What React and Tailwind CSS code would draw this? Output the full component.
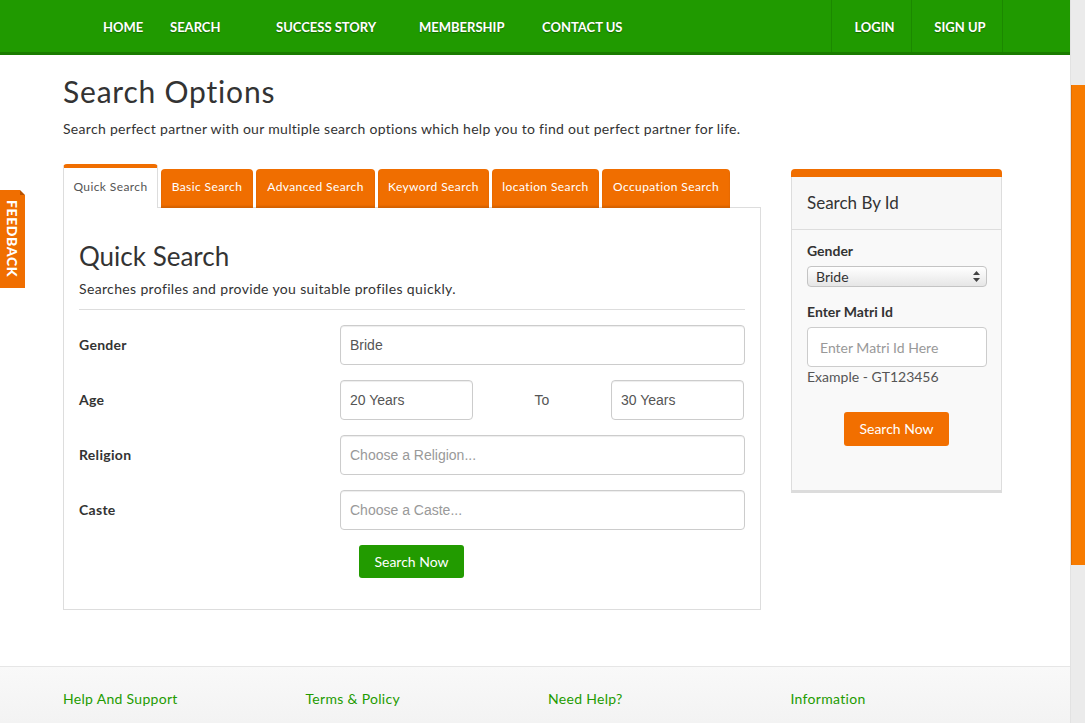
import React from "react";

const navLeft = [
  { label: "HOME", w: "w-[67px]" },
  { label: "SEARCH", w: "w-[106px]" },
  { label: "SUCCESS STORY", w: "w-[143px]" },
  { label: "MEMBERSHIP", w: "w-[123px]" },
  { label: "CONTACT US", w: "w-[100px]" },
];

const tabs = [
  { label: "Basic Search", w: "w-[92px]" },
  { label: "Advanced Search", w: "w-[119px]" },
  { label: "Keyword Search", w: "w-[111px]" },
  { label: "location Search", w: "w-[107px]" },
  { label: "Occupation Search", w: "w-[128px]" },
];

function Field({ label, children }) {
  return (
    <div className="flex items-center h-[40px]">
      <div className="w-[261px] pb-[2px] text-[14px] font-bold tracking-[0.3px] text-[#333]">{label}</div>
      {children}
    </div>
  );
}

function TextBox({ value, placeholder, className = "w-[405px]" }) {
  return (
    <div
      className={`${className} h-[40px] border border-[#ccc] rounded-[4px] bg-white shadow-[inset_0_1px_1px_rgba(0,0,0,0.075)] flex items-center px-[9px] text-[14px] ${
        value ? "text-[#555]" : "text-[#999]"
      }`}
      style={{ fontFamily: '"Liberation Sans", Arial, sans-serif' }}
    >
      {value || placeholder}
    </div>
  );
}

export default function App() {
  return (
    <div
      className="relative flex h-[723px] w-[1085px] overflow-hidden bg-white text-[#333]"
      style={{ fontFamily: 'Lato, "Open Sans", sans-serif' }}
    >
      <div className="w-[1070px] flex flex-col">
        {/* top nav */}
        <div className="h-[55px] bg-[#209a00] border-b-[3px] border-[#1a7c00]">
          <div className="w-[940px] ml-[63px] h-full flex">
            <div className="flex items-center pl-[40px] pt-[4px] flex-1">
              {navLeft.map((n) => (
                <div
                  key={n.label}
                  className={`${n.w} text-[13px] font-bold text-white [text-shadow:0_1px_1px_rgba(0,0,0,0.35)]`}
                >
                  {n.label}
                </div>
              ))}
            </div>
            <div className="flex h-full">
              <div className="w-[80px] h-full pt-[4px] pl-[6px] border-l border-[#1b8800] flex items-center justify-center text-[13px] font-bold text-white [text-shadow:0_1px_1px_rgba(0,0,0,0.35)]">
                LOGIN
              </div>
              <div className="w-[92px] h-full pt-[4px] pl-[6px] border-l border-r border-[#1b8800] flex items-center justify-center text-[13px] font-bold text-white [text-shadow:0_1px_1px_rgba(0,0,0,0.35)]">
                SIGN UP
              </div>
            </div>
          </div>
        </div>

        {/* content */}
        <div className="w-[940px] ml-[63px] pt-[18px]">
          <h1 className="text-[30px] leading-[36px] tracking-[0.8px] text-[#333]">Search Options</h1>
          <p className="mt-[10px] text-[14px] leading-[20px] tracking-[0.3px] text-[#333]">
            Search perfect partner with our multiple search options which help you to find out perfect partner for life.
          </p>

          <div className="mt-[25px] flex gap-[30px]">
            {/* left column */}
            <div className="w-[698px]">
              <div className="flex items-end gap-[2px] relative z-10 -mb-px">
                <div className="w-[95px] h-[44px] pb-[3px] bg-white border-t-4 border-[#f06e00] border-x border-x-[#ddd] rounded-t-[4px] flex items-center justify-center text-[12px] tracking-[0.4px] text-[#555]">
                  Quick Search
                </div>
                {tabs.map((t) => (
                  <div
                    key={t.label}
                    className={`${t.w} ml-px h-[39px] pb-[3px] bg-[#f06e00] rounded-t-[4px] shadow-[inset_0_-2px_2px_rgba(0,0,0,0.12)] flex items-center justify-center text-[12px] tracking-[0.4px] text-white`}
                  >
                    {t.label}
                  </div>
                ))}
              </div>
              <div className="border border-[#ddd] px-[15px] pt-[32px] pb-[31px]">
                <h2 className="text-[26px] leading-[32px] text-[#333]">Quick Search</h2>
                <p className="mt-[7px] text-[14px] leading-[20px] tracking-[0.35px] text-[#333]">
                  Searches profiles and provide you suitable profiles quickly.
                </p>
                <div className="mt-[10px] border-t border-[#ddd]" />
                <div className="mt-[15px] flex flex-col gap-[15px]">
                  <Field label="Gender">
                    <TextBox value="Bride" />
                  </Field>
                  <Field label="Age">
                    <TextBox value="20 Years" className="w-[133px]" />
                    <div
                      className="w-[138px] text-center text-[14px] text-[#555]"
                      style={{ fontFamily: '"Liberation Sans", Arial, sans-serif' }}
                    >
                      To
                    </div>
                    <TextBox value="30 Years" className="w-[133px]" />
                  </Field>
                  <Field label="Religion">
                    <TextBox placeholder="Choose a Religion..." />
                  </Field>
                  <Field label="Caste">
                    <TextBox placeholder="Choose a Caste..." />
                  </Field>
                </div>
                <div className="mt-[15px] pl-[280px]">
                  <div className="w-[105px] h-[33px] pb-[1px] bg-[#229b00] rounded-[3px] flex items-center justify-center text-[14px] text-white">
                    Search Now
                  </div>
                </div>
              </div>
            </div>

            {/* right column */}
            <div className="w-[211px] mt-[5px] self-start">
              <div className="h-[8px] bg-[#f06e00] rounded-t-[4px]" />
              <div className="h-[53px] bg-[#f7f7f7] border-x border-b border-[#ddd] px-[15px] flex items-center text-[17px] text-[#333]">
                Search By Id
              </div>
              <div className="bg-[#f9f9f9] border-x border-[#ddd] border-b-[3px] border-b-[#dcdcdc] px-[15px] pt-[11px] pb-[44px]">
                <div className="text-[14px] leading-[20px] font-bold">Gender</div>
                <div className="mt-[5px] h-[21px] w-[180px] rounded-[4px] border border-[#c4c4c4] bg-gradient-to-b from-[#ffffff] to-[#e6e6e6] flex items-center justify-between pl-[8px] pr-[6px] text-[14px] text-[#333]">
                  <span>Bride</span>
                  <svg width="7" height="11" viewBox="0 0 7 11">
                    <path d="M3.5 0 L7 4 H0 Z" fill="#444" />
                    <path d="M3.5 11 L7 7 H0 Z" fill="#444" />
                  </svg>
                </div>
                <div className="mt-[15px] text-[14px] leading-[20px] font-bold">Enter Matri Id</div>
                <div className="mt-[5px] h-[40px] w-[180px] rounded-[4px] border border-[#ccc] bg-white flex items-center px-[12px] text-[14px] text-[#999]">
                  Enter Matri Id Here
                </div>
                <div className="text-[14px] leading-[20px] text-[#555]">Example - GT123456</div>
                <div className="mt-[25px] flex justify-center">
                  <div className="w-[105px] h-[34px] pb-[1px] bg-[#f26f00] rounded-[3px] flex items-center justify-center text-[14px] text-white">
                    Search Now
                  </div>
                </div>
              </div>
            </div>
          </div>
        </div>

        {/* footer */}
        <div className="mt-[56px] flex-1 border-t border-[#e6e6e6] bg-gradient-to-b from-[#f9f9f9] to-[#f3f3f3]">
          <div className="w-[970px] ml-[48px] grid grid-cols-4 pt-[22px]">
            {["Help And Support", "Terms & Policy", "Need Help?", "Information"].map((f) => (
              <div key={f} className="px-[15px] text-[14px] leading-[20px] tracking-[0.3px] text-[#239b00]">
                {f}
              </div>
            ))}
          </div>
        </div>
      </div>

      {/* scrollbar */}
      <div className="w-[15px] bg-[#ebebeb] border-l border-[#e2e2e2]">
        <div className="mt-[85px] h-[480px] bg-[#f77b00] border-l border-[#e36e00]" />
      </div>

      {/* feedback tab */}
      <div className="absolute left-0 top-[190px] w-[25px] h-[98px] bg-[#f06e00] flex items-center justify-center">
        <span className="[writing-mode:vertical-rl] text-[14px] font-black text-white tracking-[0.6px]">
          FEEDBACK
        </span>
        <div className="absolute right-0 top-0 w-0 h-0 border-t-[5px] border-t-white border-l-[5px] border-l-[#b85200]" />
      </div>
    </div>
  );
}
